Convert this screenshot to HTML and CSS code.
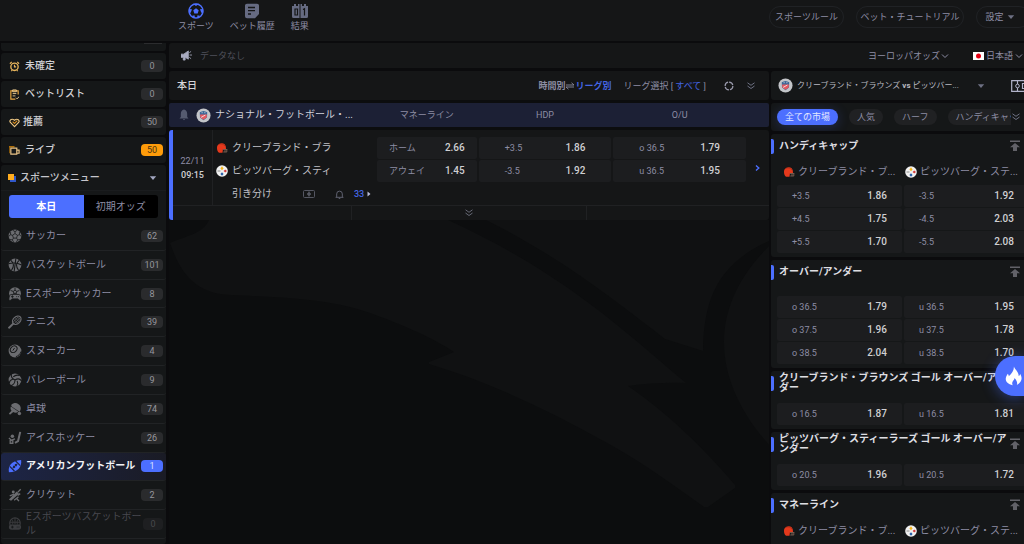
FILE: index.html
```html
<!DOCTYPE html>
<html lang="ja">
<head>
<meta charset="utf-8">
<title>スポーツ</title>
<link rel="stylesheet" href="styles.css">
</head>
<body>
<svg class="sprite" aria-hidden="true">
  <symbol id="chevron" viewBox="0 0 8 8"><path d="M1 2.500 4 5.500 7 2.500" fill="none" stroke="currentColor"/></symbol>
  <symbol id="double" viewBox="0 0 8 8"><path d="M.5 .8 4 3.300 7.500 .8M.5 4 4 6.500 7.500 4" fill="none" stroke="currentColor"/></symbol>
  <symbol id="caret" viewBox="0 0 8 8"><path d="M.8 2.300h6.400L4 6z" fill="currentColor"/></symbol>
  <symbol id="nfl" viewBox="0 0 16 16"><circle cx="8" cy="8" r="7.500" fill="#c3c5c9"/><path d="M4 4.500 6 3.800 8 3.300l2 .5 2 .7-.3 5.500L8 13l-3.700-3z" fill="#3c6797"/><path d="M4.300 7h7.400l-.3 3L8 12.500 4.600 10z" fill="#e65a60"/><path d="M5.500 10 10 7.500M6 5h1m2 0h1" stroke="#f5eded" stroke-width=".9"/></symbol>
  <symbol id="browns" viewBox="0 0 12 12"><path d="M1 6a4.500 4.500 0 0 1 8.800-1.500L10 7H7l-.5 3.700H3C1.400 9.500 1 7.500 1 6z" fill="#e5391c"/><path d="M3 2.300C5 1.500 7.500 2 9 4" stroke="#a82b18" fill="none" stroke-width=".7"/><path d="M7 7.500h4.300M7.300 10h3.500V7.500M9 7.500V10" stroke="#7d6152" fill="none" stroke-width=".9"/></symbol>
  <symbol id="steelers" viewBox="0 0 12 12"><circle cx="6" cy="6" r="5.800" fill="#f1f1f1"/><path d="M6 1.200 7.600 3.500 6 5.200 4.400 3.500z" fill="#f5b51b"/><path d="M9.200 4.400 11 6 9.200 7.600 7.600 6z" fill="#d23c3c"/><path d="M6 7.200 7.600 9 6 10.800 4.400 9z" fill="#225aa6"/><path d="M1.500 6h3" stroke="#777" stroke-width=".8"/></symbol>
  <symbol id="top" viewBox="0 0 12 12"><path d="M1 .5h10V2H1zM6 3l5 4.300H8V11H4V7.300H1z" fill="currentColor"/></symbol>
  <symbol id="ball" viewBox="0 0 16 16"><circle cx="8" cy="8" r="7.300" fill="currentColor"/><path d="m8 5.200 2.800 2-1 3.200H6.200l-1-3.200zM8 5.200V3L5.200 1.300M8 3l2.800-1.700M5.200 7.200 2.800 6.500 1 8.500M2.800 6.500 3 3.500M10.800 7.200l2.400-.7L15 8.500M13.200 6.500 13 3.500M6.200 10.400 5 12.500l-3-.5M5 12.500l1.500 2.600M9.800 10.400 11 12.500l3-.5M11 12.500l-1.500 2.600" fill="none" stroke="#151718" stroke-width=".9"/></symbol>
  <symbol id="basket" viewBox="0 0 16 16"><circle cx="8" cy="8" r="7.300" fill="currentColor"/><path d="M9 .5 7 15.500M.5 6.500C5 5.500 11 5.500 15.500 8M3 2.500c3.500 3 4 7.500 1 11.500M13 2.500c-3.500 3-4 7.500-1 11.500" fill="none" stroke="#151718" stroke-width="1.200"/></symbol>
  <symbol id="esoccer" viewBox="0 0 16 16"><circle cx="8" cy="7" r="6.800" fill="currentColor"/><path d="m8 3.500 2 1.500-.8 2.300H6.800L6 5zM8 3.500V1M6 5 3 4M10 5l3-1M6.800 7.300 5 9M9.200 7.300 11 9" fill="none" stroke="#151718"/><path d="M3.500 8.500h9c2 0 3.500 7 1.500 7-1.500 0-2-2-3-2H5c-1 0-1.500 2-3 2-2 0-.5-7 1.500-7z" fill="currentColor" stroke="#151718" stroke-width=".9"/><path d="M3.500 11h3M5 9.500v3M9.500 11h1m1 0h1" stroke="#151718"/></symbol>
  <symbol id="tennis" viewBox="0 0 16 16"><ellipse cx="10" cy="6" rx="5.500" ry="4" transform="rotate(-42 10 6)" fill="none" stroke="currentColor" stroke-width="1.400"/><path d="m6 4.500 5.500 5.300M8 3l5 5M10 1.500l4 4M6 8l6-6M7 10l7-7M9.500 10 15 5" stroke="currentColor" stroke-width=".7"/><path d="m6 9.800-4.800 4.700" stroke="currentColor" stroke-width="2.200" stroke-linecap="round"/></symbol>
  <symbol id="snooker" viewBox="0 0 16 16"><circle cx="8" cy="8" r="7.300" fill="currentColor"/><ellipse cx="6.500" cy="6" rx="4.200" ry="3.300" transform="rotate(-45 6.500 6)" fill="none" stroke="#151718" stroke-width="1.100"/><path d="m5.500 7.500 2-3M9 14.500c3-1 5-3 6-6" stroke="#151718" stroke-width="1.100" fill="none"/></symbol>
  <symbol id="volley" viewBox="0 0 16 16"><circle cx="8" cy="8" r="7.300" fill="currentColor"/><path d="M8 8C5 7 3 4 4 1.500M8 8c3-2 6-1 7.500 1M8 8c0 3-2 6-5 6.500M5.500 7C3 8 1.500 10 1.500 11.500M6 4.500C8 2.500 11 2 13.500 3M10.500 9c1 2 1 4-.5 6.500" fill="none" stroke="#151718" stroke-width="1.200"/></symbol>
  <symbol id="pong" viewBox="0 0 16 16"><path d="M3.500 3.500a6 6 0 0 1 8.500-1c3 2 3.300 5.500 1.300 8.500L4.500 5.500zM3.300 5l8.700 6c-2 1.500-4.500 1.500-6 .5L2.300 14.500 1 13l3-3c-1.200-1.500-1.500-3-.7-5z" fill="currentColor"/><circle cx="13" cy="13" r="2" fill="currentColor"/></symbol>
  <symbol id="hockey" viewBox="0 0 16 16"><path d="M14 1 11.500 11.500 8 13.500" stroke="currentColor" stroke-width="2.300" fill="none"/><circle cx="5" cy="6" r="2" fill="currentColor"/><path d="m1 8 3 2.500 4-1.500M2.500 11h3v3h-3z" stroke="currentColor" stroke-width="1.500" fill="none"/></symbol>
  <symbol id="football" viewBox="0 0 16 16"><path d="M1 15C0 8 3 2 15 1c1 7-3 14-14 14z" fill="currentColor"/><path d="m2 8.500 5.500 5.500M8.500 2 14 7.500M5.500 10.500l5-5M6 8l2 2m0-4 2 2" stroke="#1b2344" stroke-width="1.300"/></symbol>
  <symbol id="cricket" viewBox="0 0 16 16"><path d="m1 13 9-9 2.500 2.500-9 8z" fill="currentColor"/><path d="m11 5 3.500-3.500M2 9l5-2M7 14l5-4M10 12l2.500 3M11 8.500l3-2" stroke="currentColor" stroke-width="1.600"/><circle cx="6" cy="4.500" r="1.700" fill="currentColor"/></symbol>
  <symbol id="ebasket" viewBox="0 0 16 16"><circle cx="8" cy="7" r="6" fill="none" stroke="currentColor" stroke-width="1.400"/><path d="M8 1v7M2 6h12M4 2.500c2 2 2 4 1 6M12 2.500c-2 2-2 4-1 6" stroke="currentColor" fill="none"/><rect x="1" y="8.500" width="14" height="6" rx="3" fill="currentColor"/><path d="M3.500 11.500h3M5 10v3M10 11.500h1m1 0h1" stroke="#151718"/></symbol>
  <symbol id="flame" viewBox="0 0 18 20"><path d="M9.500 0c.5 3 5 5 5 10 1-.5 1.500-1.500 1.500-2.500 2.500 4 2.500 9-3.500 12 1-2.500 0-5-2.500-7.500.2 2-1.200 2.500-2 4-.6 1.200-.5 2.500.2 3.700C2.500 18.500 0 15.500 1 11.500c.4-1.700 1.300-2.700 1.800-4 .9.700 1.200 1.700 1.200 2.700C7 7.500 9.500 4.500 9.500 0z" fill="#fff"/></symbol>
</svg>

<div class="app">
  <header class="header">
    <nav class="nav">
      <a class="nav-item" href="#"><svg class="nav-icon active" viewBox="0 0 16 16"><circle cx="8" cy="8" r="7" fill="none" stroke="currentColor" stroke-width="1.400"/><path d="m8 5.300 2.700 2-1 3.100H6.300l-1-3.100zM5 .8h6L8 3zM.8 6 4 6.300 2.700 9.800.8 10zM15.200 6 12 6.300l1.300 3.500 1.900.2zM3.500 13l3-.8.5 3zM12.500 13l-3-.8-.5 3z" fill="currentColor"/></svg><span>スポーツ</span></a>
      <a class="nav-item" href="#"><svg class="nav-icon" viewBox="0 0 16 16"><path d="M3 .8h10A2 2 0 0 1 15 3v8l-4 4.300H3a2 2 0 0 1-2-2V3A2 2 0 0 1 3 .8z" fill="currentColor"/><path d="M4 4.500h7M4 7.700h7M4 11h3" stroke="#151617" stroke-width="1.300"/></svg><span>ベット履歴</span></a>
      <a class="nav-item" href="#"><svg class="nav-icon" viewBox="0 0 16 16"><path d="M0 3h2V1h2v2h2V1h1.500v14H1.500A1.500 1.500 0 0 1 0 13.500zM8.500 1H10v2h2V1h2v2h2v10.500a1.500 1.500 0 0 1-1.500 1.500h-6z" fill="currentColor"/><path d="M3 6h2.500v6H3zM11 6.500l1.500-.8V12.500" stroke="#151617" fill="none" stroke-width="1.200"/></svg><span>結果</span></a>
    </nav>
    <div class="header-tools">
      <button class="pill rule">スポーツルール</button>
      <button class="pill tutorial">ベット・チュートリアル</button>
      <button class="pill setting">設定 <svg class="i8"><use href="#caret"/></svg></button>
    </div>
  </header>

  <div class="body">
    <aside class="sidebar">
      <div class="peek"><span></span></div>
      <a class="side-card" href="#"><svg class="side-icon" viewBox="0 0 12 12"><circle cx="6" cy="6.300" r="4" fill="none" stroke="#e6b45c" stroke-width="1.500"/><path d="M6 4v2.500h1.800M1 3 3 1M9 1l2 2M2.500 11l1-1M9.500 11l-1-1" stroke="#e6b45c" stroke-width="1.300" fill="none"/></svg><span>未確定</span><b class="badge">0</b></a>
      <a class="side-card" href="#"><svg class="side-icon" viewBox="0 0 12 12"><path d="M10 6V2H2v9h5" fill="none" stroke="#e6a640" stroke-width="1.300"/><path d="M4 1h4v2H4zM4 5h4M4 7.500h3M7.500 9.500l1.200 1.200L11 8.500" stroke="#efcf94" fill="none"/></svg><span>ベットリスト</span><b class="badge">0</b></a>
      <a class="side-card tight" href="#"><svg class="side-icon" viewBox="0 0 12 12"><path d="M6 10.500 1.500 6C0 4 2.500.8 6 3.500 9.500.8 12 4 10.500 6z" fill="none" stroke="#efc884" stroke-width="1.200"/><path d="m4 5 2 2 3-3" stroke="#d88b19" fill="none" stroke-width="1.200"/></svg><span>推薦</span><b class="badge">50</b></a>
      <a class="side-card" href="#"><svg class="side-icon" viewBox="0 0 12 12"><path d="M0 9V2h6" fill="none" stroke="#ad6e09" stroke-width="1.600"/><path d="M2 3.500h6.500V10H2zM8.500 5.500H11V9H8.500" fill="none" stroke="#eac486" stroke-width="1.300"/></svg><span>ライブ</span><b class="badge hot">50</b></a>
      <section class="menu">
        <button class="menu-head"><svg class="menu-icon" viewBox="0 0 8 8"><path d="M2 2h6v6H2z" fill="#3158ca"/><path d="M0 0h6v6H0z" fill="#ffad1f"/></svg><span>スポーツメニュー</span><svg class="i8"><use href="#caret"/></svg></button>
        <div class="tabs"><button class="tab on">本日</button><button class="tab">初期オッズ</button></div>
        <div class="sports">
          <a class="sport" href="#"><svg><use href="#ball"/></svg><span>サッカー</span><b class="badge">62</b></a>
          <a class="sport" href="#"><svg><use href="#basket"/></svg><span>バスケットボール</span><b class="badge">101</b></a>
          <a class="sport" href="#"><svg><use href="#esoccer"/></svg><span>Eスポーツサッカー</span><b class="badge">8</b></a>
          <a class="sport" href="#"><svg><use href="#tennis"/></svg><span>テニス</span><b class="badge">39</b></a>
          <a class="sport" href="#"><svg><use href="#snooker"/></svg><span>スヌーカー</span><b class="badge">4</b></a>
          <a class="sport" href="#"><svg><use href="#volley"/></svg><span>バレーボール</span><b class="badge">9</b></a>
          <a class="sport" href="#"><svg><use href="#pong"/></svg><span>卓球</span><b class="badge">74</b></a>
          <a class="sport" href="#"><svg><use href="#hockey"/></svg><span>アイスホッケー</span><b class="badge">26</b></a>
          <a class="sport current" href="#"><svg><use href="#football"/></svg><span>アメリカンフットボール</span><b class="badge">1</b></a>
          <a class="sport" href="#"><svg><use href="#cricket"/></svg><span>クリケット</span><b class="badge">2</b></a>
          <a class="sport off" href="#"><svg><use href="#ebasket"/></svg><span>Eスポーツバスケットボール</span><b class="badge">0</b></a>
        </div>
      </section>
    </aside>

    <div class="content">
      <div class="notice">
        <svg class="horn" viewBox="0 0 12 12"><path d="M0 4.500h3L8 1v9L4.500 8v3H2.500V8H0zM9 3l2-1.500M9.300 5.500H12M9 8l2 1.500" fill="currentColor" stroke="currentColor" stroke-width=".9"/></svg>
        <span class="notice-text">データなし</span>
        <button class="plain odds-type">ヨーロッパオッズ <svg class="i8"><use href="#chevron"/></svg></button>
        <button class="plain language"><svg class="flag" viewBox="0 0 11 8"><path d="M0 0h11v8H0z" fill="#fff"/><circle cx="5.500" cy="4" r="2.500" fill="#e60012"/></svg> 日本語 <svg class="i8"><use href="#chevron"/></svg></button>
      </div>

      <div class="columns">
        <main class="main">
          <div class="main-head">
            <h1>本日</h1>
            <button class="plain sort"><b>時間別</b><svg class="swap" viewBox="0 0 10 8"><path d="M1 3h8L6.500 .8M9 5H1l2.500 2.200" fill="none" stroke="#8d8da2" stroke-width=".9"/></svg><b class="blue">リーグ別</b></button>
            <button class="plain pick">リーグ選択 [ <span class="blue">すべて</span> ]</button>
            <button class="plain" aria-label="更新"><svg class="refresh" viewBox="0 0 10 10"><circle cx="5" cy="5" r="3.900" fill="none" stroke="#9a9aac" stroke-width="1.200" stroke-dasharray="5 1"/></svg></button>
            <button class="plain" aria-label="展開"><svg class="i8"><use href="#double"/></svg></button>
          </div>

          <div class="league">
            <div class="league-name"><svg class="bell" viewBox="0 0 10 12"><path d="M5 .5C3 1 1.800 2.500 1.800 5v3L.5 9.500h9L8.200 8V5C8.200 2.500 7 1 5 .5zM3.800 10h2.400L5 11.300z" fill="currentColor"/></svg><svg class="nfl"><use href="#nfl"/></svg><span>ナショナル・フットボール・...</span></div>
            <div class="odds-grid league-cols"><span>マネーライン</span><span>HDP</span><span>O/U</span></div>
          </div>

          <article class="match">
            <div class="match-body">
              <div class="kickoff"><span>22/11</span><b>09:15</b></div>
              <div class="teams">
                <div class="team"><svg><use href="#browns"/></svg><span>クリーブランド・ブラ</span></div>
                <div class="team"><svg><use href="#steelers"/></svg><span>ピッツバーグ・スティ</span></div>
                <div class="team draw"><span>引き分け</span><svg class="pitch" viewBox="0 0 12 8"><rect x=".5" y=".5" width="11" height="7" rx="1" fill="none" stroke="currentColor"/><path d="M6 1v6M4 4l2-2 2 2-2 2z" fill="currentColor" stroke="currentColor" stroke-width=".6"/></svg><svg class="alarm" viewBox="0 0 8 8"><path d="M.5 6.500h7M1.500 6.500V3.500a2.500 2.500 0 0 1 5 0v3M3.300 7.500h1.400" fill="none" stroke="currentColor" stroke-width=".8"/></svg><a class="more" href="#">33 <svg viewBox="0 0 4 6"><path d="M.5 .5 3.500 3l-3 2.500z" fill="#b8bbd6"/></svg></a></div>
              </div>
              <div class="odds-grid">
                <button class="odd first"><span>ホーム</span><b>2.66</b></button>
                <button class="odd"><span>+3.5</span><b>1.86</b></button>
                <button class="odd"><span>o 36.5</span><b>1.79</b></button>
                <button class="odd first"><span>アウェイ</span><b>1.45</b></button>
                <button class="odd"><span>-3.5</span><b>1.92</b></button>
                <button class="odd"><span>u 36.5</span><b>1.95</b></button>
              </div>
              <button class="plain next" aria-label="次へ"><svg viewBox="0 0 5 8"><path d="M1 1.500 3.800 4 1 6.500" fill="none" stroke="#4c6fff" stroke-width="1.400"/></svg></button>
            </div>
            <div class="match-foot"><span></span><button class="plain" aria-label="もっと見る"><svg class="i8"><use href="#double"/></svg></button><span></span></div>
          </article>

          <svg class="horse" viewBox="0 0 600 324" preserveAspectRatio="xMidYMin slice" aria-hidden="true">
            <path d="M40 0C34 14 16 16 1 23 8 42 19 74 62 75c40 2 95 3 136 17 35 12 70 28 87 40L260 142v2c60 18 120 46 180 80 35 19 68 44 95 63h4l27-19v-3C535 228 495 190 459 166q30-4 58-3C455 111 395 53 279 0z"/>
            <path d="M317 0c75 37 135 85 179 119l38 12c1-45 10-85 66-110V0zM600 26c-60 60-60 130 0 199z"/>
          </svg>
        </main>

        <aside class="markets">
          <div class="event"><svg class="nfl"><use href="#nfl"/></svg><span>クリーブランド・ブラウンズ <b>vs</b> ピッツバー...</span><svg class="i8"><use href="#caret"/></svg><svg class="field" viewBox="0 0 18 12"><path d="M.7 .7h16.600v10.600H.7zM6.500 0v4M6.500 8v4M14 3.500h-2.500v5H14" fill="none" stroke="currentColor" stroke-width="1.200"/><circle cx="6.500" cy="6" r="1.800" fill="#151718" stroke="currentColor"/></svg></div>
          <div class="filters"><button class="chip on">全ての市場</button><button class="chip">人気</button><button class="chip">ハーフ</button><button class="chip cut">ハンディキャップ</button><button class="plain" aria-label="展開"><svg class="i8"><use href="#double"/></svg></button></div>

          <section class="market">
            <h2><span>ハンディキャップ</span><svg><use href="#top"/></svg></h2>
            <div class="sides"><div><svg><use href="#browns"/></svg>クリーブランド・ブ...</div><div><svg><use href="#steelers"/></svg>ピッツバーグ・ステ...</div></div>
            <div class="prices">
              <button class="odd"><span>+3.5</span><b>1.86</b></button><button class="odd"><span>-3.5</span><b>1.92</b></button>
              <button class="odd"><span>+4.5</span><b>1.75</b></button><button class="odd"><span>-4.5</span><b>2.03</b></button>
              <button class="odd"><span>+5.5</span><b>1.70</b></button><button class="odd"><span>-5.5</span><b>2.08</b></button>
            </div>
          </section>
          <section class="market airy">
            <h2><span>オーバー/アンダー</span><svg><use href="#top"/></svg></h2>
            <div class="prices">
              <button class="odd"><span>o 36.5</span><b>1.79</b></button><button class="odd"><span>u 36.5</span><b>1.95</b></button>
              <button class="odd"><span>o 37.5</span><b>1.96</b></button><button class="odd"><span>u 37.5</span><b>1.78</b></button>
              <button class="odd"><span>o 38.5</span><b>2.04</b></button><button class="odd"><span>u 38.5</span><b>1.70</b></button>
            </div>
          </section>
          <section class="market">
            <h2><span>クリーブランド・ブラウンズ ゴール オーバー/アンダー</span><svg><use href="#top"/></svg></h2>
            <div class="prices spaced"><button class="odd"><span>o 16.5</span><b>1.87</b></button><button class="odd"><span>u 16.5</span><b>1.81</b></button></div>
          </section>
          <section class="market">
            <h2><span>ピッツバーグ・スティーラーズ ゴール オーバー/アンダー</span><svg><use href="#top"/></svg></h2>
            <div class="prices spaced"><button class="odd"><span>o 20.5</span><b>1.96</b></button><button class="odd"><span>u 20.5</span><b>1.72</b></button></div>
          </section>
          <section class="market">
            <h2><span>マネーライン</span><svg><use href="#top"/></svg></h2>
            <div class="sides"><div><svg><use href="#browns"/></svg>クリーブランド・ブ...</div><div><svg><use href="#steelers"/></svg>ピッツバーグ・ステ...</div></div>
          </section>
        </aside>
      </div>
    </div>
  </div>
</div>
<button class="fire" aria-label="注目"><svg><use href="#flame"/></svg></button>
</body>
</html>
```
FILE: styles.css
```css
* { box-sizing: border-box; }
html, body { height: 100%; margin: 0; overflow: hidden; }
body {
  background: #0b0b0d;
  color: #8d8da4;
  font: 10px/14px Roboto, "Noto Sans CJK JP", sans-serif;
}
a { color: inherit; text-decoration: none; }
button { margin: 0; padding: 0; border: 0; background: none; color: inherit; font: inherit; white-space: nowrap; }
h1, h2 { margin: 0; font-size: 10px; }
svg { display: block; flex: none; }
.sprite { position: absolute; width: 0; height: 0; }
.i8 { width: 8px; height: 8px; }
.blue { color: #4465e4; }
.plain { display: flex; align-items: center; }

.app { display: flex; flex-direction: column; height: 100%; min-width: 1034px; }

/* Header */
.header { display: flex; justify-content: space-between; height: 41px; flex: none; background: #151617; font-size: 9px; }
.nav { display: flex; gap: 16px; padding: 3px 0 0 178px; }
.nav-item { display: flex; flex-direction: column; align-items: center; }
.nav-icon { width: 16px; height: 16px; color: #666b82; }
.nav-icon.active { color: #4c6fff; }
.header-tools { display: flex; gap: 12px; padding: 6px 4px 0 0; }
.pill { display: flex; align-items: center; justify-content: center; gap: 3px; height: 22px; border: 1px solid #202225; border-radius: 11px; }
.rule { width: 75px; }
.tutorial { width: 108px; }
.setting { width: 54px; padding-right: 6px; }
.setting .i8 { color: #6d7083; }

.body { display: flex; flex: 1; min-height: 0; gap: 2px; padding-top: 2px; }

/* Sidebar */
.sidebar { display: flex; flex-direction: column; gap: 2px; width: 167px; flex: none; padding: 0 1px; }
.peek { height: 8px; flex: none; display: flex; justify-content: flex-end; padding-right: 4px; background: #151718; border-radius: 0 0 3px 3px; }
.peek span { width: 18px; height: 1px; background: #2b2c2e; }
.side-card { display: flex; align-items: center; gap: 5px; height: 26px; flex: none; padding: 0 3px 0 8px; background: #151718; border-radius: 3px; color: #d0d0d4; font-weight: 500; }
.side-card.tight { gap: 3px; }
.side-icon { width: 11px; height: 11px; }
.badge { width: 22px; height: 12px; flex: none; margin-left: auto; border-radius: 4px; background: #2a2b2d; color: #96969c; font-size: 9px; line-height: 12px; font-weight: 400; text-align: center; }
.badge.hot { background: #ff9c0a; color: #4b3410; }
.menu { display: flex; flex-direction: column; flex: 1; min-height: 0; padding-bottom: 5px; background: #151718; border-radius: 3px; }
.menu-head { display: flex; align-items: center; gap: 4px; height: 26px; flex: none; padding: 0 9px 0 7px; border-bottom: 1px solid #1a1c1e; color: #c6c6cc; font-weight: 500; }
.menu-head .i8 { margin-left: auto; color: #a2a7c0; }
.menu-icon { width: 8px; height: 8px; }
.tabs { display: grid; grid-template-columns: 1fr 1fr; height: 23px; flex: none; margin: 4px 8px; border-radius: 3px; overflow: hidden; background: #000; }
.tab.on { background: #4c6fff; color: #fff; font-weight: 700; }
.sports { display: flex; flex-direction: column; flex: 1; }
.sport { display: flex; align-items: center; gap: 4px; flex: 1 0 0; min-height: 28px; padding: 0 3px 0 7px; border-bottom: 1px solid #212325; border-radius: 3px; }
.sport svg { width: 14px; height: 14px; color: #6b6c70; }
.sport span { flex: 1; white-space: nowrap; }
.sport.current { background: linear-gradient(90deg, #1d2546, #1a1b25); color: #f3f3f6; font-weight: 700; }
.sport.current svg { color: #4c6fff; }
.sport.current .badge { background: #4c6fff; color: #d9e0ff; }
.sport.off { color: #48484f; }
.sport.off span { white-space: normal; }
.sport.off svg { color: #3b3c3f; }
.sport.off .badge { width: 20px; margin-left: -4px; background: #1e1f21; color: #48484c; }

/* Notice bar */
.content { display: flex; flex-direction: column; flex: 1; min-width: 0; gap: 3px; }
.notice { display: flex; align-items: center; height: 25px; flex: none; padding: 0 11px 0 12px; background: #151617; border-radius: 3px; font-size: 9px; }
.horn { width: 11px; height: 11px; color: #a9abc0; }
.notice-text { flex: 1; margin-left: 8px; color: #50515b; }
.odds-type { gap: 1px; }
.language { gap: 2px; margin-left: 24px; }
.flag { width: 11px; height: 8px; }

.columns { display: flex; flex: 1; min-height: 0; gap: 2px; }

/* Match list */
.main { display: flex; flex-direction: column; flex: 1; min-width: 0; background: #0c0d0e; }
.main-head { display: flex; align-items: center; height: 29px; flex: none; padding: 0 14px 0 8px; background: #151617; border-radius: 3px; font-size: 9px; }
.main-head h1 { flex: 1; color: #d5d5d8; font-weight: 500; }
.main-head .i8 { color: #6d7083; }
.sort { margin-right: 12px; }
.swap { width: 10px; height: 8px; }
.pick { margin-right: 18px; white-space: pre; }
.refresh { width: 10px; height: 10px; margin-right: 13px; }
.league { display: flex; align-items: center; height: 24px; flex: none; margin: 3px 0; background: #1c2035; border-radius: 2px; }
.league-name { display: flex; align-items: center; width: 208px; flex: none; padding-left: 10px; color: #d0d1db; white-space: nowrap; }
.bell { width: 10px; height: 12px; color: #555b70; }
.nfl { width: 15px; height: 15px; margin: 0 4px 0 7px; }
.odds-grid { display: grid; grid-template-columns: 100fr 133fr 133fr; gap: 1px 2px; flex: 1; align-content: start; }
.league-cols { margin-right: 23px; font-size: 9px; text-align: center; }
.match { flex: none; border-left: 4px solid #4c6fff; border-radius: 3px; background: #151617; }
.match-body { display: flex; align-items: stretch; }
.kickoff { display: flex; flex-direction: column; align-items: center; justify-content: center; width: 40px; border-right: 1px solid #202123; font-size: 9px; }
.kickoff b { color: #d0d0d2; font-weight: 500; }
.teams { display: flex; flex-direction: column; gap: 1px; width: 164px; flex: none; padding: 7px 0 0 3px; color: #c0c0c6; }
.team { display: flex; align-items: center; gap: 4px; height: 22px; white-space: nowrap; }
.team > svg { width: 12px; height: 12px; }
.team.draw { gap: 0; padding-left: 16px; }
.team.draw span { width: 71px; }
.team .pitch { width: 12px; height: 8px; color: #555762; }
.team .alarm { width: 9px; height: 9px; margin: 0 10px 0 20px; color: #676978; }
.more { display: flex; align-items: center; gap: 3px; color: #4465e4; font-size: 9px; font-weight: 500; }
.more svg { width: 4px; height: 6px; }
.match .odds-grid { padding-top: 7px; }
.odd { display: flex; align-items: center; justify-content: space-between; height: 22px; padding: 0 26px; border-radius: 2px; background: #1c1d1f; font-size: 9px; }
.odd.first { padding: 0 12px; }
.odd b { color: #cfcfd2; font-size: 10px; font-weight: 500; }
.next { width: 23px; flex: none; justify-content: center; }
.next svg { width: 5px; height: 8px; }
.match-foot { display: grid; grid-template-columns: 178fr 236fr 182fr; height: 15px; border-top: 1px solid #202123; color: #666875; }
.match-foot button { justify-content: center; border: solid #202123; border-width: 0 1px; }
.horse { width: 100%; flex: 1; min-height: 0; fill: #101112; }

/* Markets */
.markets { display: flex; flex-direction: column; gap: 3px; width: 263px; flex: none; }
.event { display: flex; align-items: center; height: 29px; flex: none; background: #151718; border-radius: 3px; color: #b9b9c1; font-size: 8px; }
.event span { width: 178px; white-space: nowrap; }
.event .i8 { margin: 0 26px 0 2px; color: #6d7083; }
.event .field { width: 18px; height: 12px; color: #b2b4ca; }
.filters { display: flex; align-items: center; gap: 11px; height: 28px; flex: none; padding-left: 6px; overflow: hidden; background: #151718; border-radius: 3px; font-size: 9px; }
.chip { height: 16px; padding: 0 8px; border-radius: 8px; background: #202123; line-height: 16px; }
.chip.on { background: #4c6fff; color: #e3e7ff; box-shadow: 0 2px 12px #4c6fff40; }
.chip.cut { width: 63px; flex: none; padding-right: 0; overflow: hidden; border-radius: 8px 0 0 8px; text-align: left; }
.filters .plain { margin-left: -10px; color: #6d7083; }
.market { flex: none; padding-bottom: 4px; background: #151718; border-radius: 3px; }
.market h2 { display: flex; align-items: center; height: 24px; padding-right: 13px; color: #dedee2; font-weight: 700; line-height: 10px; }
.market h2::before { content: ""; width: 3px; height: 15px; flex: none; margin-right: 5px; border-radius: 0 2px 2px 0; background: #4c6fff; }
.market h2 span { flex: 1; }
.market h2 svg { width: 12px; height: 12px; color: #626268; }
.market.airy h2 { margin-bottom: 12px; }
.sides { display: grid; grid-template-columns: 1fr 1fr; gap: 2px; height: 27px; padding: 0 5px 0 6px; white-space: nowrap; }
.sides div { display: flex; align-items: center; gap: 3px; padding-left: 6px; }
.sides div + div { padding-left: 1px; }
.sides svg { width: 12px; height: 12px; }
.prices { display: grid; grid-template-columns: 1fr 1fr; gap: 1px 2px; padding: 0 5px 0 6px; }
.prices.spaced { padding-top: 8px; }
.prices .odd { padding: 0 15px; }

.fire { position: fixed; top: 356px; right: 0; display: flex; align-items: center; width: 29px; height: 40px; padding-left: 10px; border-radius: 20px 0 0 20px; background: #4c6fff; box-shadow: 0 2px 14px #4c6fff70; }
.fire svg { width: 17px; height: 20px; }
```
